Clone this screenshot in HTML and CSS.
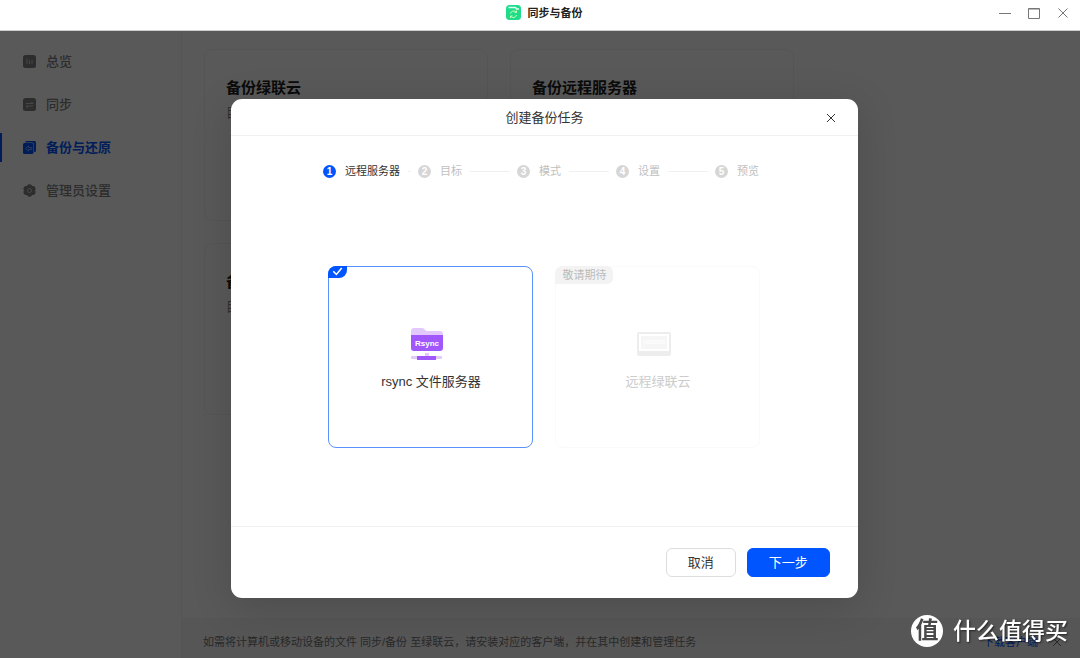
FILE: index.html
```html
<!DOCTYPE html>
<html lang="zh-CN">
<head>
    <meta charset="UTF-8">
    <title>同步与备份</title>
    <link rel="stylesheet" href="styles.css">
</head>
<body>
<header class="titlebar">
    <div class="titlebar-name">
        <svg class="app-logo" viewBox="0 0 30 30">
            <rect width="30" height="30" rx="7" fill="#1fdc8a"/>
            <path d="M5 5h14l2 3h5" fill="none" stroke="#d8fff0" stroke-width="3" stroke-linejoin="round"/>
            <path d="M9 17a6.500 6.500 0 0 1 11-3M21 11v4h-4M21 20a6.500 6.500 0 0 1-11 3M9 26v-4h4" fill="none" stroke="#c9ffb0" stroke-width="2"/>
        </svg>
        <h1>同步与备份</h1>
    </div>
    <div class="window-buttons">
        <button type="button" aria-label="最小化"><svg viewBox="0 0 14 14"><path d="M1 7.500h12"/></svg></button>
        <button type="button" aria-label="最大化"><svg viewBox="0 0 14 14"><path d="M1.500 2.500h11v10h-11zM1.500 3h11"/></svg></button>
        <button type="button" aria-label="关闭窗口"><svg viewBox="0 0 14 14"><path d="M2.500 2.500l9 9M11.500 2.500l-9 9"/></svg></button>
    </div>
</header>
<div class="app">
    <nav class="sidebar">
        <a href="#" class="nav-item">
            <svg viewBox="0 0 26 26"><rect width="26" height="26" rx="5" fill="currentColor"/><path d="M8 7v11M13 10v8M18 10v8" stroke="#fff" stroke-opacity=".6" stroke-width="2"/></svg>
            总览</a>
        <a href="#" class="nav-item">
            <svg viewBox="0 0 26 26"><rect width="26" height="26" rx="5" fill="currentColor"/><path d="M6 11h14l-4-4M20 16H6l4 4" fill="none" stroke="#fff" stroke-opacity=".6" stroke-width="2"/></svg>
            同步</a>
        <a href="#" class="nav-item nav-active">
            <svg viewBox="0 0 26 26"><path d="M4 3a3 3 0 0 1 3-3h16a3 3 0 0 1 3 3v16a3 3 0 0 1-3 3h-1V7a4 4 0 0 0-4-4z" fill="currentColor"/><rect y="4" width="21" height="22" rx="3" fill="currentColor"/><path d="M5 15l6-5v3h6v4h-6v3z" fill="none" stroke="#fff" stroke-opacity=".6" stroke-width="1.500"/></svg>
            备份与还原</a>
        <a href="#" class="nav-item">
            <svg viewBox="0 0 26 26"><path d="M9 2l4-2 4 2 1 2h4l3 4v4l-2 1 2 1v4l-3 4h-4l-1 2-4 2-4-2-1-2H4l-3-4v-4l2-1-2-1V8l3-4h4z" fill="currentColor"/><circle cx="13" cy="13" r="4" fill="none" stroke="#fff" stroke-opacity=".6" stroke-width="2"/></svg>
            管理员设置</a>
    </nav>
    <main class="main">
        <div class="card-list">
            <section class="card"><h2>备份绿联云</h2><p>目</p></section>
            <section class="card"><h2>备份远程服务器</h2></section>
            <section class="card"><h2>备</h2><p>目</p></section>
        </div>
        <div class="tips">
            <span>如需将计算机或移动设备的文件 同步/备份 至绿联云，请安装对应的客户端，并在其中创建和管理任务</span>
            <div class="tips-right">
                <a href="#">下载客户端</a>
                <button type="button" aria-label="关闭提示"><svg viewBox="0 0 14 14"><path d="M3 3l8 8M11 3l-8 8"/></svg></button>
            </div>
        </div>
    </main>
    <!-- 遮罩层和弹框 -->
    <div class="mask">
        <form class="dialog" role="dialog" aria-labelledby="dialog-title">
            <div class="dialog-header">
                <h2 id="dialog-title">创建备份任务</h2>
                <button type="button" class="dialog-close" aria-label="关闭"><svg viewBox="0 0 14 14"><path d="M3 3l8 8M11 3l-8 8"/></svg></button>
            </div>
            <div class="dialog-body">
                <ol class="steps">
                    <li class="step step-current"><span class="step-num">1</span>远程服务器</li>
                    <li class="step"><span class="step-num">2</span>目标</li>
                    <li class="step"><span class="step-num">3</span>模式</li>
                    <li class="step"><span class="step-num">4</span>设置</li>
                    <li class="step"><span class="step-num">5</span>预览</li>
                </ol>
                <div class="options">
                    <label class="option">
                        <input type="radio" name="server" value="rsync" checked>
                        <span class="option-check"><svg viewBox="0 0 18 11"><path d="M5 5l3 3 5-6"/></svg></span>
                        <svg class="option-icon" viewBox="0 0 34 34">
                            <path d="M1 9V4a3 3 0 0 1 3-3h8q2 0 3 2 1 1 3 1h12a3 3 0 0 1 3 3v4H1z" fill="#e2c8fd"/>
                            <path d="M1 8h32v13a3 3 0 0 1-3 3H4a3 3 0 0 1-3-3z" fill="#a057fb"/>
                            <path d="M15 26h4v3h-4z" fill="#e2c8fd"/>
                            <rect x="1" y="29" width="31" height="3" rx="1" fill="#e2c8fd"/>
                            <rect x="7" y="29" width="19" height="4" fill="#a057fb"/>
                            <text x="17" y="19" text-anchor="middle" class="icon-text">Rsync</text>
                        </svg>
                        <span>rsync 文件服务器</span>
                    </label>
                    <label class="option option-disabled">
                        <input type="radio" name="server" value="nas" disabled>
                        <span class="option-tag">敬请期待</span>
                        <svg class="option-icon" viewBox="0 0 34 34">
                            <rect y="5" width="34" height="24" rx="2" fill="#ededed"/>
                            <rect x="2" y="7" width="30" height="17" fill="#fff"/>
                            <rect x="4" y="9" width="26" height="13" fill="#f6f6f6"/>
                            <text x="17" y="17" text-anchor="middle" class="icon-brand">UGREEN</text>
                        </svg>
                        <span>远程绿联云</span>
                    </label>
                </div>
            </div>
            <div class="dialog-footer">
                <button type="button" class="btn">取消</button>
                <button type="submit" class="btn btn-primary">下一步</button>
            </div>
        </form>
    </div>
</div>
<div class="watermark"><span class="watermark-logo">值</span>什么值得买</div>
</body>
</html>
```
FILE: styles.css
```css
* {
    box-sizing: border-box;
}
body, h1, h2, p, ol {
    margin: 0;
    padding: 0;
}
body {
    min-height: 100vh;
    display: flex;
    flex-direction: column;
    background: #fff;
    color: #333;
    font-family: "Liberation Sans", "Noto Sans CJK SC", sans-serif;
    font-size: 13px;
    line-height: 20px;
}
a {
    text-decoration: none;
}
button {
    padding: 0;
    border: 0;
    background: none;
    color: inherit;
    font: inherit;
    cursor: pointer;
}
button svg {
    display: block;
    width: 14px;
    height: 14px;
    fill: none;
    stroke: currentColor;
}
.titlebar {
    display: grid;
    grid-template-columns: 1fr auto 1fr;
    align-items: center;
    height: 31px;
    padding: 0 10px 5px;
    border-bottom: 1px solid #ccc;
}
.titlebar-name {
    grid-column: 2;
    display: flex;
    align-items: center;
    gap: 7px;
    padding-left: 8px;
}
.titlebar h1 {
    font-size: 11px;
    color: #222;
}
.app-logo {
    width: 15px;
    height: 15px;
}
.window-buttons {
    display: flex;
    justify-content: flex-end;
    gap: 15px;
    color: #777;
}
.app {
    position: relative;
    flex: 1;
    display: flex;
}
.sidebar {
    width: 182px;
    padding-top: 16px;
    border-right: 1px solid #f3f3f3;
    display: flex;
    flex-direction: column;
    gap: 14px;
}
.nav-item {
    display: flex;
    align-items: center;
    gap: 10px;
    height: 29px;
    padding-left: 21px;
    border-left: 2px solid transparent;
    color: #808080;
    font-weight: 500;
}
.nav-item svg {
    width: 13px;
    height: 13px;
}
.nav-active {
    border-left-color: #0055ff;
    color: #0055ff;
    font-weight: bold;
}
.main {
    flex: 1;
    display: flex;
    flex-direction: column;
}
.card-list {
    flex: 1;
    display: grid;
    grid-template-columns: 284px 284px;
    grid-auto-rows: 172px;
    gap: 22px;
    padding: 18px 22px;
}
.card {
    padding: 28px 21px;
    border: 1px solid #f3f3f3;
    border-radius: 8px;
}
.card h2 {
    font-size: 15px;
    color: #222;
}
.card p {
    margin-top: 5px;
    color: #888;
}
.tips {
    display: flex;
    align-items: center;
    justify-content: space-between;
    height: 40px;
    padding: 8px 16px 0 21px;
    background: #f6f6f6;
    color: #777;
    font-size: 11px;
}
.tips-right {
    display: flex;
    align-items: center;
    gap: 12px;
}
.tips a {
    color: #0055ff;
}
.mask {
    position: absolute;
    top: 0;
    right: 0;
    bottom: 0;
    left: 0;
    display: flex;
    align-items: center;
    justify-content: center;
    padding: 8px 0 0 9px;
    background: rgba(0, 0, 0, .65);
}
.dialog {
    width: 58vw;
    min-width: 500px;
    border-radius: 11px;
    background: #fff;
    box-shadow: 0 8px 40px rgba(0, 0, 0, .15);
}
.dialog-header {
    display: grid;
    grid-template-columns: 1fr auto 1fr;
    align-items: center;
    height: 37px;
    padding: 1px 20px 0;
    border-bottom: 1px solid #f0f0f0;
}
.dialog-header h2 {
    grid-column: 2;
    font-size: 13px;
    font-weight: normal;
}
.dialog-close {
    justify-self: end;
}
.dialog-body {
    display: flex;
    flex-direction: column;
    align-items: center;
    padding: 25px 20px 78px;
}
.steps {
    display: flex;
    width: 443px;
    list-style: none;
    color: #c0c0c0;
    font-size: 11px;
}
.step {
    display: flex;
    align-items: center;
    width: 99px;
    padding-right: 7px;
    white-space: nowrap;
}
.step-current {
    flex: 1;
    color: #333;
}
.step::after {
    content: "";
    flex: 1;
    height: 1px;
    margin-left: 8px;
    background: #f0f0f0;
}
.step:last-child {
    width: auto;
}
.step:last-child::after {
    display: none;
}
.step-num {
    width: 13px;
    height: 13px;
    margin-right: 9px;
    border-radius: 50%;
    background: #d6d6d6;
    color: #fff;
    font-size: 10px;
    font-weight: bold;
    line-height: 13px;
    text-align: center;
}
.step-current .step-num {
    background: #0055ff;
}
.options {
    display: flex;
    gap: 22px;
    margin-top: 85px;
}
.option {
    position: relative;
    display: flex;
    flex-direction: column;
    align-items: center;
    width: 205px;
    height: 182px;
    padding-top: 60px;
    border: 1px solid #5a92fb;
    border-radius: 8px;
}
.option input {
    position: absolute;
    opacity: 0;
}
.option-disabled {
    border-color: #fafafa;
    color: #ccc;
}
.option-icon {
    width: 34px;
    height: 34px;
    margin: 0 8px 11px 0;
}
.icon-text {
    fill: #fff;
    font-size: 8px;
    font-weight: bold;
}
.icon-brand {
    fill: #fff;
    font-size: 5px;
    font-weight: bold;
}
.option-check, .option-tag {
    position: absolute;
    top: -1px;
    left: -1px;
    border-radius: 8px 0;
}
.option-check {
    width: 19px;
    height: 12px;
    background: #0055ff;
}
.option-check svg {
    display: block;
    fill: none;
    stroke: #fff;
    stroke-width: 1.5;
}
.option-tag {
    padding: 0 7px;
    border-radius: 8px 6px 6px 0;
    background: #f3f3f3;
    color: #bbb;
    font-size: 11px;
    line-height: 18px;
}
.dialog-footer {
    display: flex;
    justify-content: flex-end;
    gap: 11px;
    padding: 21px 28px;
    border-top: 1px solid #f0f0f0;
}
.btn {
    height: 29px;
    padding: 0 21px;
    border: 1px solid #ddd;
    border-radius: 6px;
}
.btn-primary {
    border-color: #0055ff;
    background: #0055ff;
    color: #fff;
}
.watermark {
    position: fixed;
    right: 12px;
    bottom: 11px;
    display: flex;
    align-items: center;
    gap: 10px;
    color: #fff;
    font-size: 23px;
    font-weight: 500;
    line-height: 32px;
    text-shadow: 1px 1px 2px rgba(0, 0, 0, .6);
}
.watermark-logo {
    width: 32px;
    height: 32px;
    border-radius: 50%;
    background: #fff;
    color: #4a4a4a;
    font-weight: bold;
    line-height: 30px;
    text-align: center;
    text-shadow: none;
}
```
